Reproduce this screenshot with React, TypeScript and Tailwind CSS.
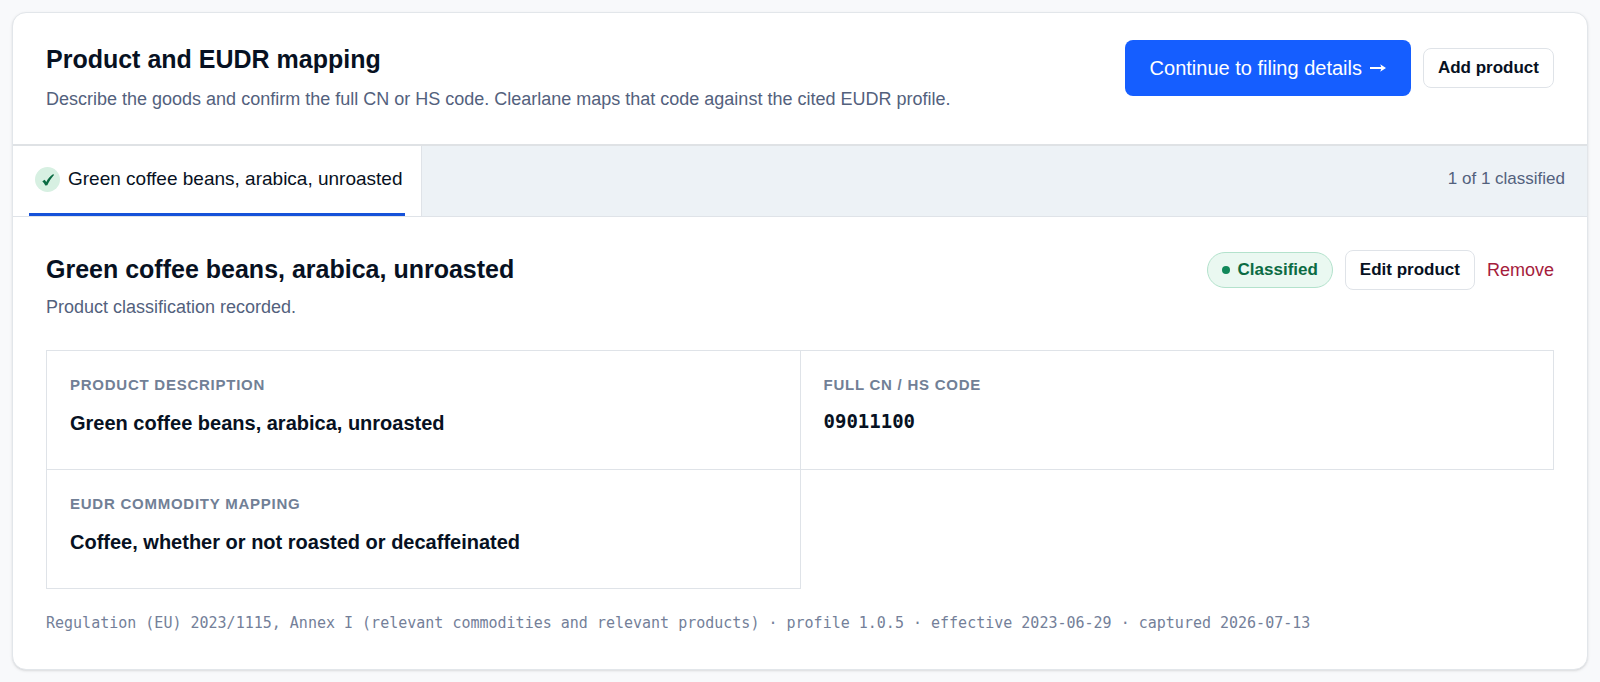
import { useState } from 'react'

const products = [
  {
    id: 'p1',
    name: 'Green coffee beans, arabica, unroasted',
    code: '09011100',
    mapping: 'Coffee, whether or not roasted or decaffeinated',
  },
]

const citation = [
  'Regulation (EU) 2023/1115, Annex I (relevant commodities and relevant products)',
  'profile 1.0.5',
  'effective 2023-06-29',
  'captured 2026-07-13',
]

const monoFont = "font-['DejaVu_Sans_Mono','Liberation_Mono',monospace]"

function Field({ label, value, mono }: { label: string; value: string; mono?: boolean }) {
  return (
    <div className="-mt-px -ml-px h-[120px] border border-[#dfe3e8] px-[23px] pt-6">
      <dt className="text-[15px] leading-5 font-bold tracking-wider text-[#718096] uppercase">{label}</dt>
      <dd
        className={`mt-3 font-bold text-[#071122] ${mono ? `text-[19px] leading-7 ${monoFont}` : 'text-[20px] leading-8'}`}
      >
        {value}
      </dd>
    </div>
  )
}

export default function App() {
  const [activeId, setActiveId] = useState(products[0].id)
  const active = products.find((p) => p.id === activeId) ?? products[0]

  return (
    <div className="min-h-screen bg-[#f8f9fb] p-3 pb-0 font-['Liberation_Sans',Arial,sans-serif] text-[#071122]">
      <section className="overflow-hidden rounded-[14px] border border-[#e2e6ea] bg-white shadow-sm">
        <header className="flex items-start justify-between gap-6 border-b-2 border-[#dfe2e5] px-[33px] pt-[27px] pb-[31px]">
          <div>
            <h1 className="text-[25px] leading-[38px] font-bold">Product and EUDR mapping</h1>
            <p className="mt-[7px] text-[18px] leading-7 text-[#53617d]">
              Describe the goods and confirm the full CN or HS code. Clearlane maps that code against the cited EUDR profile.
            </p>
          </div>
          <div className="flex shrink-0 items-center gap-3">
            <button
              type="button"
              className="flex h-14 items-center gap-2 rounded-lg bg-[#155eff] px-[25px] text-[20px] text-white"
            >
              Continue to filing details
              <svg viewBox="0 0 16 12" className="h-3 w-4" aria-hidden="true">
                <path d="M0 5.1H11.200L10.200 2.200L16 6L10.200 9.800L11.200 6.900H0Z" fill="currentColor" />
              </svg>
            </button>
            <button
              type="button"
              className="h-10 rounded-lg border border-[#dfe3e8] bg-white px-3.5 text-[17px] font-bold"
            >
              Add product
            </button>
          </div>
        </header>

        <div className="flex items-stretch justify-between border-b border-[#dfe3e8] bg-[#edf2f6]">
          <div role="tablist" className="flex">
            {products.map((p) => (
              <div key={p.id} className="border-r border-[#dfe3e8] bg-white px-4">
                <button
                  type="button"
                  role="tab"
                  aria-selected={p.id === activeId}
                  onClick={() => setActiveId(p.id)}
                  className="flex h-[70px] items-center gap-2 border-b-[3px] border-[#1652d9] pr-0.5 pl-1.5 text-[19px]"
                >
                  <span className="flex size-[25px] items-center justify-center rounded-full bg-[#d7f0e2]">
                    <svg viewBox="0 0 14 14" className="size-3.5" aria-hidden="true">
                      <path
                        d="M1.3 8.300 3.700 6.700 5.300 9.100C7 5.700 9.200 2.900 12 1.300L13.200 1.700C10.400 4.800 8 8.400 6.300 12.300L4.300 12.600C3.500 11 2.600 9.600 1.300 8.300Z"
                        fill="#0b6b43"
                      />
                    </svg>
                  </span>
                  {p.name}
                </button>
              </div>
            ))}
          </div>
          <p className="self-center pr-[22px] pb-1 text-[17px] text-[#53617d]">1 of 1 classified</p>
        </div>

        <div className="px-[33px] pt-[33px] pb-[34px]">
          <div className="flex items-start justify-between gap-6">
            <div>
              <h2 className="text-[25px] leading-[38px] font-bold">{active.name}</h2>
              <p className="mt-[3px] text-[18px] leading-8 text-[#53617d]">Product classification recorded.</p>
            </div>
            <div className="flex shrink-0 items-center gap-3">
              <span className="flex h-9 items-center gap-2 rounded-full border border-[#b3e2cc] bg-[#eaf8f1] px-3.5 text-[17px] font-bold text-[#0b6b43]">
                <span className="size-2 rounded-full bg-[#12885a]" />
                Classified
              </span>
              <button
                type="button"
                className="h-10 rounded-lg border border-[#dfe3e8] bg-white px-3.5 text-[17px] font-bold"
              >
                Edit product
              </button>
              <button type="button" className="text-[18px] text-[#a51c3c]">
                Remove
              </button>
            </div>
          </div>

          <dl className="mt-[27px] grid grid-cols-2 pt-px pl-px">
            <Field label="Product description" value={active.name} />
            <Field label="Full CN / HS code" value={active.code} mono />
            <Field label="EUDR commodity mapping" value={active.mapping} />
          </dl>

          <p className={`mt-[22px] text-[15px] leading-6 text-[#747f99] ${monoFont}`}>{citation.join(' · ')}</p>
        </div>
      </section>
    </div>
  )
}
